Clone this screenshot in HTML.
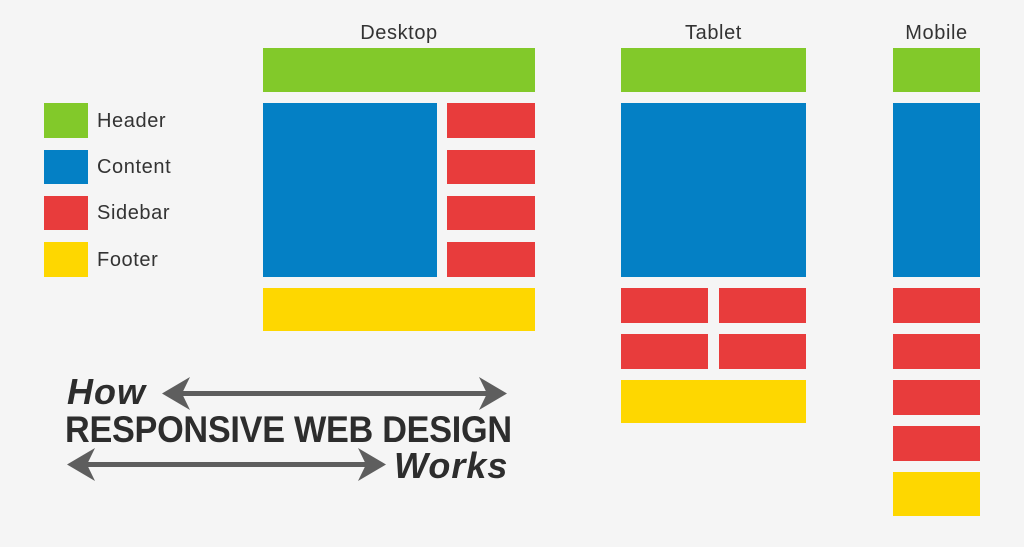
<!DOCTYPE html>
<html><head><meta charset="utf-8"><style>
body{margin:0;width:1024px;height:547px;background:#f5f5f5;position:relative;overflow:hidden;font-family:"Liberation Sans",sans-serif;color:#333}
div{position:absolute}
.g{background:#82c92a}.b{background:#0480c5}.r{background:#e83c3c}.y{background:#fed700}
.t{font-size:20px;letter-spacing:0.6px}
</style></head><body>
<div class="g" style="left:44px;top:103px;width:44px;height:35px"></div>
<div class="b" style="left:44px;top:150px;width:44px;height:34px"></div>
<div class="r" style="left:44px;top:196px;width:44px;height:34px"></div>
<div class="y" style="left:44px;top:242px;width:44px;height:35px"></div>
<div class="t" style="left:97px;top:110px">Header</div>
<div class="t" style="left:97px;top:156px">Content</div>
<div class="t" style="left:97px;top:202px">Sidebar</div>
<div class="t" style="left:97px;top:249px">Footer</div>

<div class="t" style="left:263px;width:272px;text-align:center;top:22px">Desktop</div>
<div class="g" style="left:263px;top:48px;width:272px;height:44px"></div>
<div class="b" style="left:263px;top:103px;width:174px;height:174px"></div>
<div class="r" style="left:447px;top:103px;width:88px;height:35px"></div>
<div class="r" style="left:447px;top:150px;width:88px;height:34px"></div>
<div class="r" style="left:447px;top:196px;width:88px;height:34px"></div>
<div class="r" style="left:447px;top:242px;width:88px;height:35px"></div>
<div class="y" style="left:263px;top:288px;width:272px;height:43px"></div>

<div class="t" style="left:621px;width:185px;text-align:center;top:22px">Tablet</div>
<div class="g" style="left:621px;top:48px;width:185px;height:44px"></div>
<div class="b" style="left:621px;top:103px;width:185px;height:174px"></div>
<div class="r" style="left:621px;top:288px;width:87px;height:35px"></div>
<div class="r" style="left:719px;top:288px;width:87px;height:35px"></div>
<div class="r" style="left:621px;top:334px;width:87px;height:35px"></div>
<div class="r" style="left:719px;top:334px;width:87px;height:35px"></div>
<div class="y" style="left:621px;top:380px;width:185px;height:43px"></div>

<div class="t" style="left:883px;width:107px;text-align:center;top:22px">Mobile</div>
<div class="g" style="left:893px;top:48px;width:87px;height:44px"></div>
<div class="b" style="left:893px;top:103px;width:87px;height:174px"></div>
<div class="r" style="left:893px;top:288px;width:87px;height:35px"></div>
<div class="r" style="left:893px;top:334px;width:87px;height:35px"></div>
<div class="r" style="left:893px;top:380px;width:87px;height:35px"></div>
<div class="r" style="left:893px;top:426px;width:87px;height:35px"></div>
<div class="y" style="left:893px;top:472px;width:87px;height:44px"></div>

<div style="left:67px;top:371px;font-size:36px;font-weight:bold;font-style:italic;color:#2d2d2d;letter-spacing:1px">How</div>
<div style="left:65px;top:409px;font-size:37px;font-weight:bold;color:#2d2d2d;letter-spacing:-0.3px;white-space:nowrap;transform:scaleX(0.925);transform-origin:0 0">RESPONSIVE WEB DESIGN</div>
<div style="left:394px;top:445px;font-size:36px;font-weight:bold;font-style:italic;color:#2d2d2d;letter-spacing:1px">Works</div>
<svg style="position:absolute;left:0;top:0" width="1024" height="547">
<g fill="#5e5e5e">
<rect x="170" y="391" width="330" height="5"/>
<path d="M162 393.5 L190 377 L182 393.5 L190 410 Z"/>
<path d="M507 393.5 L479 377 L487 393.5 L479 410 Z"/>
<rect x="75" y="462" width="302" height="5"/>
<path d="M67 464.5 L95 448 L87 464.5 L95 481 Z"/>
<path d="M386 464.5 L358 448 L366 464.5 L358 481 Z"/>
</g></svg>
</body></html>
